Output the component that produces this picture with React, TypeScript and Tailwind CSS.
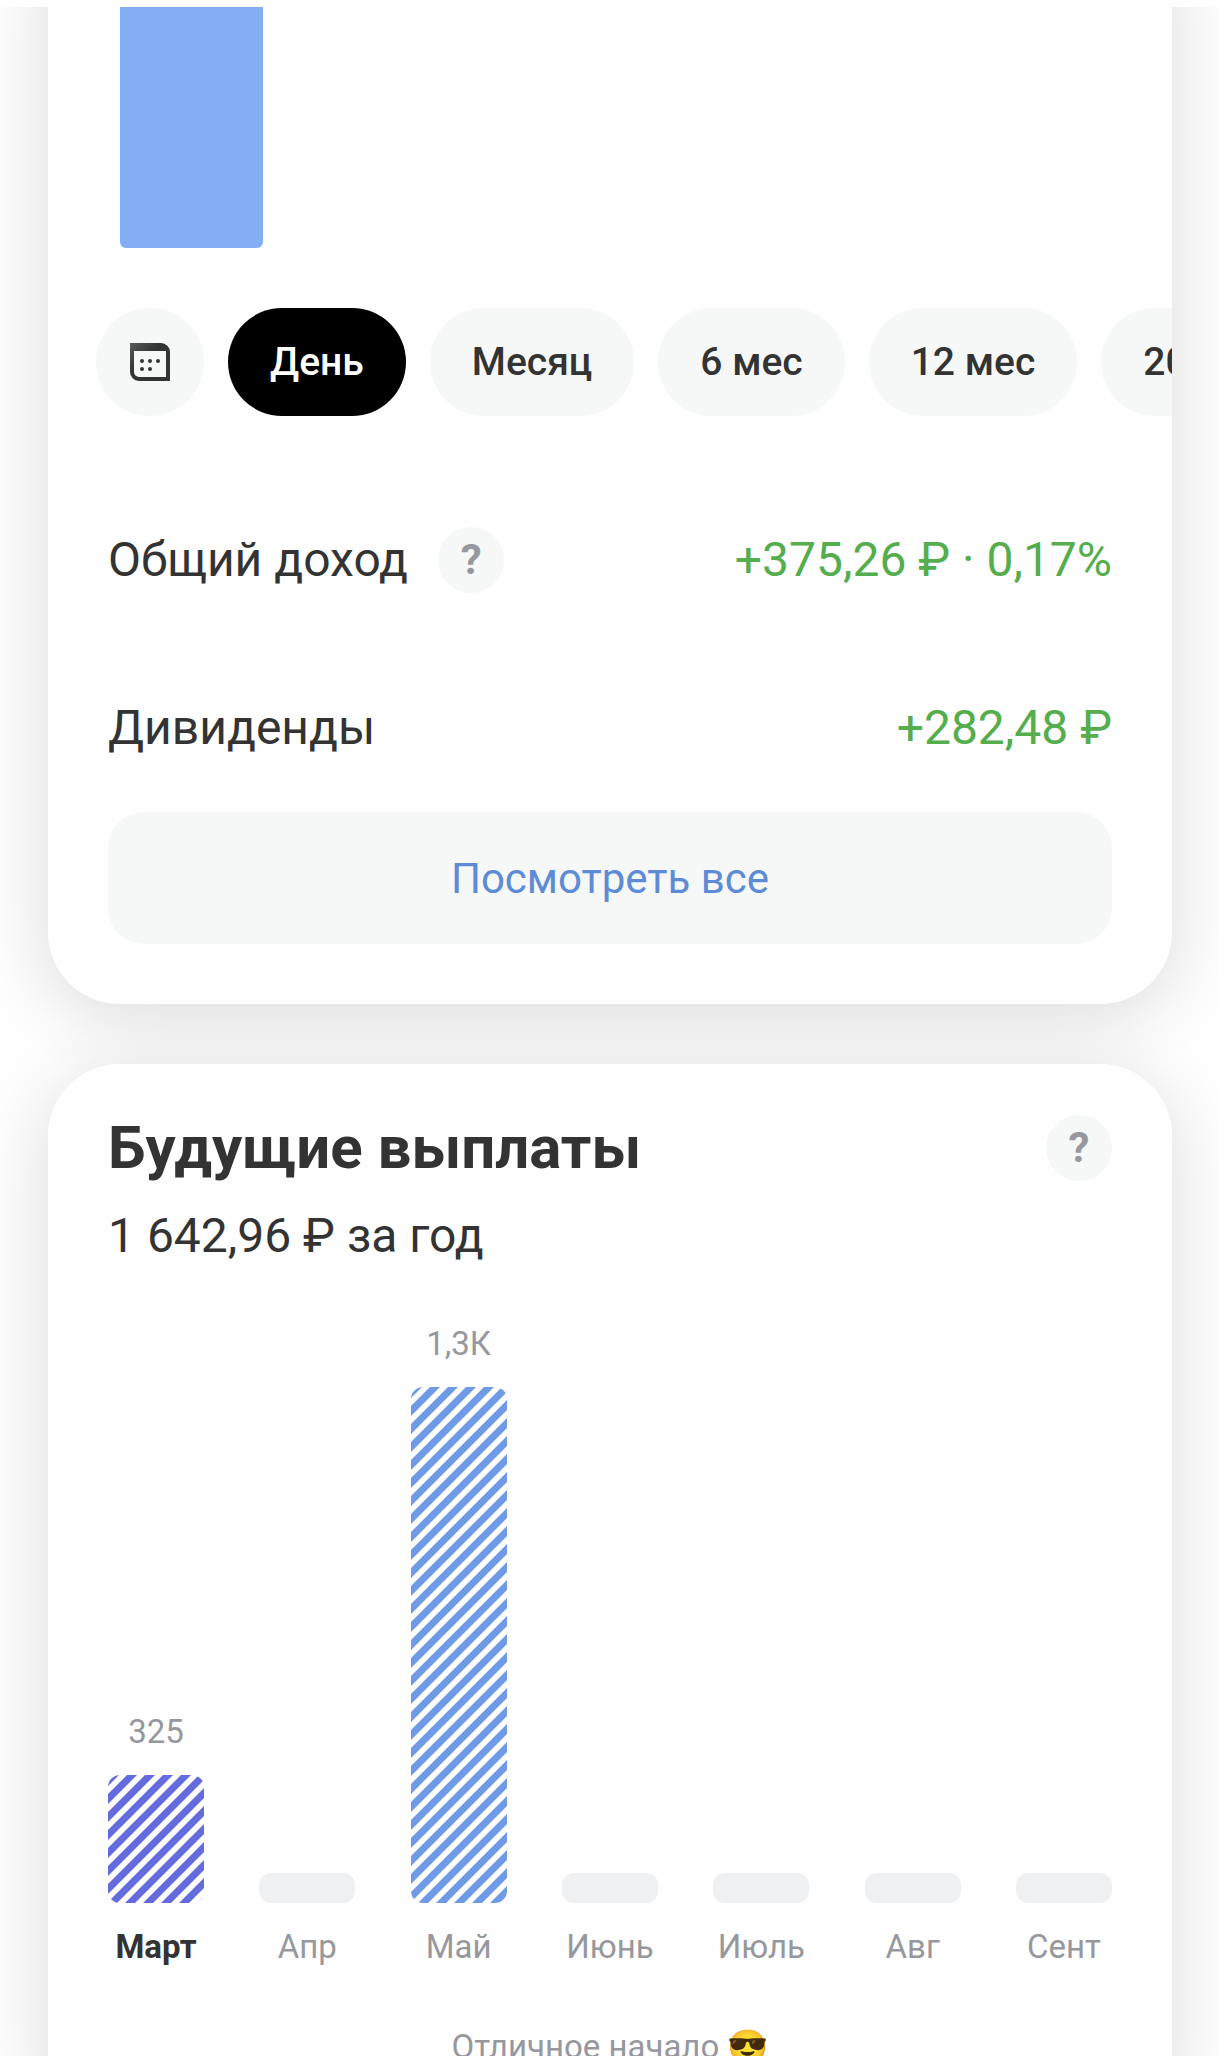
import { useId, useState } from 'react';

const periods = ['День', 'Месяц', '6 мес', '12 мес', '2024'];

const payouts = [
  { month: 'Март', label: '325', height: 128, color: '#646bdc', current: true },
  { month: 'Апр' },
  { month: 'Май', label: '1,3К', height: 516, color: '#6f9ae6' },
  { month: 'Июнь' },
  { month: 'Июль' },
  { month: 'Авг' },
  { month: 'Сент' },
];

function CalendarIcon() {
  return (
    <svg width="40" height="38" viewBox="0 0 40 38" aria-hidden="true">
      <defs>
        <linearGradient id="calendar-top" x1="0" y1="0" x2="1" y2="1">
          <stop offset="0" stopColor="#5a5b5b" />
          <stop offset="0.4" stopColor="#333434" />
        </linearGradient>
      </defs>
      <path
        fill="url(#calendar-top)"
        fillRule="evenodd"
        d="M0 0h31a9 9 0 0 1 9 9v29H9a9 9 0 0 1-9-9V0zM4 8v21a5 5 0 0 0 5 5h27V8H4z"
      />
      <g fill="#333434">
        <circle cx="12" cy="18" r="2" />
        <circle cx="20" cy="18" r="2" />
        <circle cx="28" cy="18" r="2" />
        <circle cx="12" cy="26" r="2" />
        <circle cx="20" cy="26" r="2" />
      </g>
    </svg>
  );
}

function HelpButton({ label }: { label: string }) {
  return (
    <button
      type="button"
      aria-label={label}
      className="flex h-[66px] w-[66px] shrink-0 items-center justify-center rounded-full bg-[#f6f8f8] text-[42px] leading-none font-bold text-[#96989d]"
    >
      ?
    </button>
  );
}

function StripedBar({ height, color }: { height: number; color: string }) {
  const id = useId();
  return (
    <svg width="100%" height={height} className="block rounded-xl" aria-hidden="true">
      <defs>
        <pattern id={id} width="18" height="18" patternUnits="userSpaceOnUse">
          <path fill={color} d="M1 0H11L0 11V1zM18 1V11L11 18H1z" />
        </pattern>
      </defs>
      <rect width="100%" height="100%" fill={`url(#${id})`} />
    </svg>
  );
}

export default function App() {
  const [period, setPeriod] = useState('День');

  return (
    <div className="flex h-screen flex-col overflow-hidden bg-[#fefefe] font-['Roboto',sans-serif] text-[#333333]">
      <div className="h-[7px] shrink-0" />
      <main className="isolate flex grow flex-col gap-[60px] overflow-hidden pr-[47px] pl-12">
        <section className="relative shrink-0 rounded-b-[72px] bg-[#fefefe] px-[60px] pb-[60px] before:absolute before:inset-x-0 before:-top-24 before:bottom-0 before:-z-10 before:rounded-[72px] before:shadow-[0_12px_72px_rgba(0,0,0,0.14)]">
          <div className="ml-3 h-[241px] w-[143px] rounded-b-md bg-[#85adf3]" />

          <div className="-mr-[60px] -ml-3 mt-[60px] flex gap-6 overflow-hidden">
            <button
              type="button"
              aria-label="Выбрать даты"
              className="flex h-[108px] w-[108px] shrink-0 items-center justify-center rounded-full bg-[#f6f8f8]"
            >
              <CalendarIcon />
            </button>
            {periods.map((name) => (
              <button
                key={name}
                type="button"
                onClick={() => setPeriod(name)}
                className={`h-[108px] shrink-0 rounded-full px-[42px] text-[39px] font-medium ${
                  name === period ? 'bg-black text-white' : 'bg-[#f6f8f8]'
                }`}
              >
                {name}
              </button>
            ))}
          </div>

          <dl className="mt-[60px] text-[48px] leading-[56px]">
            <div className="flex h-[168px] items-center justify-between">
              <dt className="flex items-center gap-[30px]">
                Общий доход
                <HelpButton label="Что такое общий доход" />
              </dt>
              <dd className="text-[#55ad4d]">+375,26 ₽ · 0,17%</dd>
            </div>
            <div className="flex h-[168px] items-center justify-between">
              <dt>Дивиденды</dt>
              <dd className="text-[#55ad4d]">+282,48 ₽</dd>
            </div>
          </dl>

          <button
            type="button"
            className="h-[132px] w-full rounded-[36px] bg-[#f6f8f8] text-[42px] text-[#5e8bd6]"
          >
            Посмотреть все
          </button>
        </section>

        <section className="relative shrink-0 rounded-[72px] bg-[#fefefe] px-[60px] pt-12 pb-[60px] before:absolute before:inset-0 before:-z-10 before:rounded-[72px] before:shadow-[0_12px_72px_rgba(0,0,0,0.14)]">
          <div className="flex items-center justify-between">
            <h2 className="text-[60px] leading-[72px] font-bold">Будущие выплаты</h2>
            <HelpButton label="О будущих выплатах" />
          </div>
          <p className="mt-6 text-[48px] leading-[56px]">1 642,96 ₽ за год</p>

          <ul className="mt-[60px] flex items-end justify-between text-center text-[33px] leading-[40px] text-[#96989d]">
            {payouts.map((item) => (
              <li key={item.month} className="w-24">
                {item.label && <div className="mb-[23px]">{item.label}</div>}
                {item.height ? (
                  <StripedBar height={item.height} color={item.color} />
                ) : (
                  <div className="h-[30px] rounded-xl bg-[#eff0f2]" />
                )}
                <div className={`mt-6 ${item.current ? 'font-bold text-[#333333]' : ''}`}>{item.month}</div>
              </li>
            ))}
          </ul>

          <p className="mt-[60px] text-center text-[33px] leading-[40px] text-[#96989d]">
            Отличное начало 😎
          </p>
        </section>
      </main>
    </div>
  );
}
